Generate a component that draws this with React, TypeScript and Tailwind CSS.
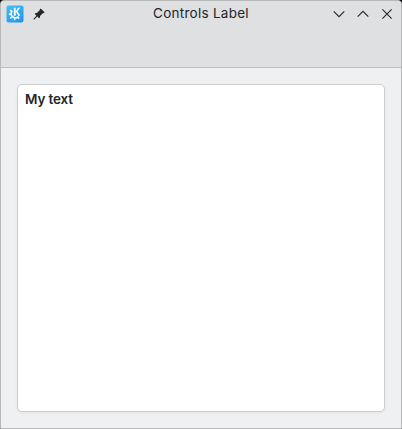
import React from "react";

function AppIcon() {
  return (
    <svg width="18" height="18" viewBox="0 0 18 18" className="shrink-0">
      <defs>
        <linearGradient id="kde" x1="0" y1="0" x2="0.6" y2="1">
          <stop offset="0" stopColor="#42c2f6" />
          <stop offset="1" stopColor="#2499ec" />
        </linearGradient>
      </defs>
      <rect x="0.5" y="0.5" width="17" height="17" rx="2" fill="url(#kde)" />
      <path d="M7.8 2.8h1.9v8H7.8zM12 2.8h2.1l-2.6 3.6 2.8 4-1.8.6-2.8-4.4z" fill="#fff" />
      <path d="M6.1 6.1a4 4 0 1 0 6.4 5.3" fill="none" stroke="#fff" strokeWidth="1.6" />
      <path
        d="M4.3 5l1.5 1.5M2.8 9.2h2M4.2 13.4l1.5-1.4M8.6 13v2.3M13.2 13.6l-1.5-1.5"
        stroke="#fff"
        strokeWidth="1.6"
      />
    </svg>
  );
}

function PinIcon() {
  return (
    <svg width="14" height="14" viewBox="0 0 14 14" className="shrink-0">
      <path d="M8.7 1.4l3.9 3.9-.9.9-.6-.1-3.1 3 .1 1.2-1 1-4.4-4.4 1-1 1.2.1 3-3.1-.1-.6z" fill="#25282b" />
      <path d="M5.4 8.6L1.7 12.3" stroke="#25282b" strokeWidth="1.1" />
    </svg>
  );
}

function WindowButton({ d }: { d: string }) {
  return (
    <button className="flex h-6 w-6 items-center justify-center">
      <svg width="12" height="12" viewBox="0 0 12 12" fill="none" stroke="#25282b" strokeWidth="1.1">
        <path d={d} />
      </svg>
    </button>
  );
}

export default function App() {
  return (
    <div className="h-[429px] w-[402px] bg-black font-['Inter','Noto_Sans',sans-serif] text-[#232629]">
      <div className="flex h-full flex-col overflow-hidden rounded-t-[4px] border border-[#b7b8ba] bg-[#eff0f1]">
        <header className="h-[67px] shrink-0 border-b border-[#bcbec0] bg-[#dee0e2]">
          <div className="grid h-[26px] grid-cols-[80px_1fr_80px] items-center">
            <div className="flex items-center gap-2 pl-[5px]">
              <AppIcon />
              <PinIcon />
            </div>
            <h1 className="pb-0.5 text-center text-[13.5px] leading-5 tracking-[0.26px] whitespace-nowrap">Controls Label</h1>
            <div className="flex items-center justify-end pr-[2px]">
              <WindowButton d="M.7 3.4L6 8.7l5.3-5.3" />
              <WindowButton d="M.7 8.6L6 3.3l5.3 5.3" />
              <WindowButton d="M1.4 1.4l9.2 9.2M10.6 1.4l-9.2 9.2" />
            </div>
          </div>
        </header>
        <main className="flex flex-1 p-4">
          <div className="flex-1 rounded-[5px] border border-[#cbcdcf] bg-white px-[7px] pt-1 shadow-[0_1px_3px_rgba(0,0,0,0.06)]">
            <p className="text-[13.5px] leading-5 font-semibold tracking-[-0.14px]">My text</p>
          </div>
        </main>
      </div>
    </div>
  );
}
